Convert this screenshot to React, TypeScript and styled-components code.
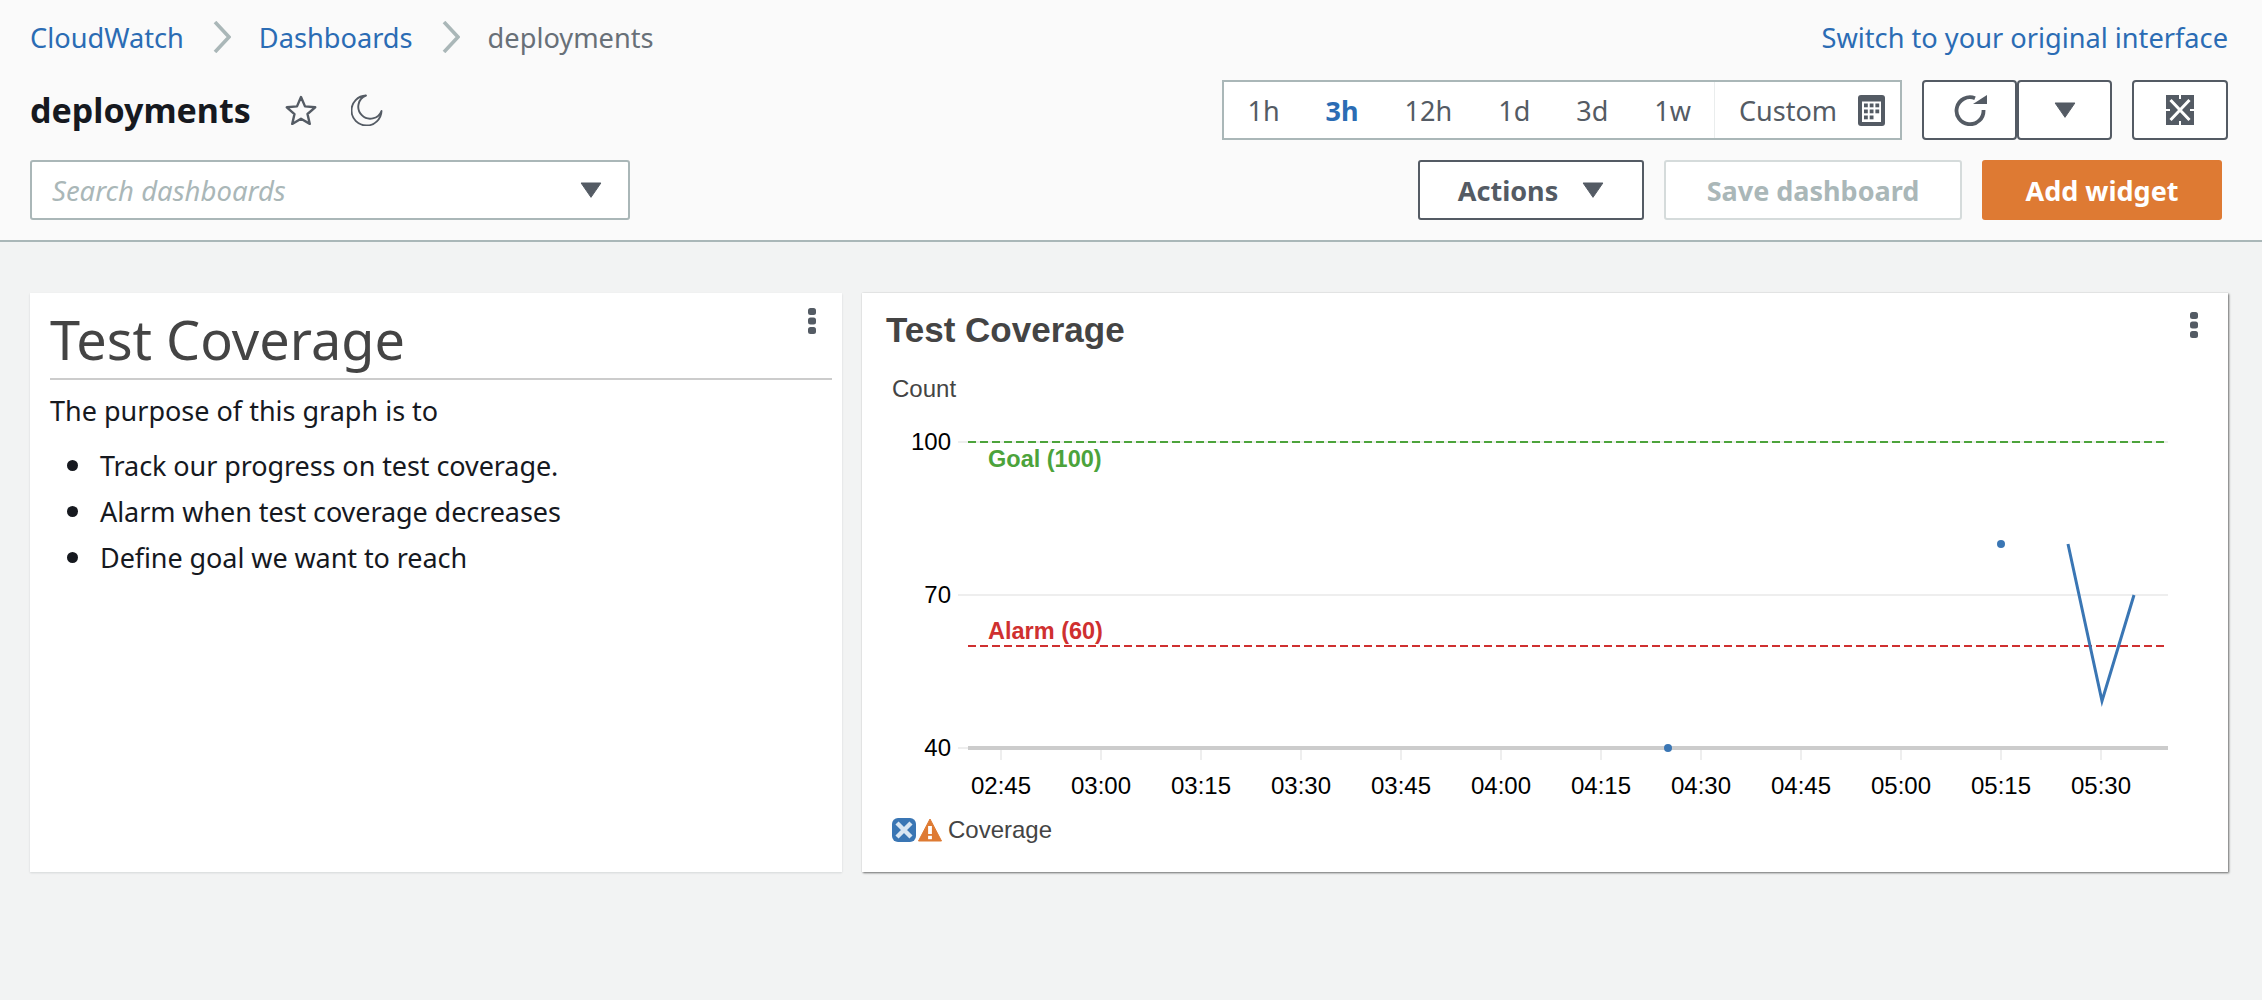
import styled, { createGlobalStyle } from 'styled-components'

const UI_FONT = `"Noto Sans", "Open Sans", sans-serif`
const CHART_FONT = `"Liberation Sans", Arial, sans-serif`

const RANGES = ['1h', '3h', '12h', '1d', '3d', '1w']
const TICKS = ['02:45', '03:00', '03:15', '03:30', '03:45', '04:00', '04:15', '04:30', '04:45', '05:00', '05:15', '05:30']
const GRID_VALUES = [100, 70, 40]

const yFor = (value: number) => 381 - (value - 40) * 5.1
const xFor = (index: number) => 139 + index * 100

const Caret = ({ size = 22 }: { size?: number }) => (
  <svg width={size} height={size * 0.72} viewBox="0 0 22 16" fill="#545b64">
    <path d="M1 1h20L11 15.5z" stroke="#545b64" strokeLinejoin="round" />
  </svg>
)

const Dots = () => (
  <svg width="10" height="26" viewBox="0 0 10 26" fill="#545b64">
    <rect x="1" y="0" width="8" height="7" rx="2.5" />
    <rect x="1" y="9.5" width="8" height="7" rx="2.5" />
    <rect x="1" y="19" width="8" height="7" rx="2.5" />
  </svg>
)

const ChevronIcon = () => (
  <svg width="18" height="32" viewBox="0 0 18 32" fill="none">
    <path d="M2 1l14 15L2 31" stroke="#aab7b8" strokeWidth="3.6" />
  </svg>
)

const StarIcon = () => (
  <svg width="32" height="30" viewBox="0 0 32 30" fill="none">
    <path
      d="M16 2l4 9.4 10.2.9-7.7 6.7 2.3 9.9L16 23.7 7.2 29l2.3-9.9-7.7-6.8L12 11.4z"
      stroke="#545b64"
      strokeWidth="2.4"
      strokeLinejoin="round"
    />
  </svg>
)

const MoonIcon = () => (
  <svg width="32" height="32" viewBox="0 0 32 32" fill="none">
    <path d="M15 1.5A15 15 0 1 0 30.5 17A12 12 0 1 1 15 1.5z" stroke="#545b64" strokeWidth="1.9" strokeLinejoin="round" />
  </svg>
)

const CalendarIcon = () => (
  <svg width="27" height="31" viewBox="0 0 27 31">
    <rect width="27" height="31" rx="3" fill="#545b64" />
    <rect x="4" y="6.5" width="19" height="20.5" fill="#fff" />
    <g fill="#545b64">
      {[0, 1, 2].map((row) =>
        [0, 1, 2].map((col) =>
          row === 2 && col === 2 ? null : (
            <rect key={`${row}-${col}`} x={6 + col * 5.7} y={8.5 + row * 6} width="3.8" height="3.8" />
          ),
        ),
      )}
    </g>
  </svg>
)

const RefreshIcon = () => (
  <svg width="34" height="31" viewBox="0 0 34 31" fill="none">
    <path d="M30.5 15A13.5 13.5 0 1 1 22 3.2" stroke="#545b64" strokeWidth="3.8" />
    <path d="M20 9h14V0z" fill="#545b64" />
  </svg>
)

const FullscreenIcon = () => (
  <svg width="28" height="30" viewBox="0 0 28 30">
    <rect width="28" height="30" fill="#545b64" />
    <path d="M4.5 5l19 20M23.5 5l-19 20" stroke="#fff" strokeWidth="3" fill="none" />
    <path d="M13 0h2v4h-2zM13 26h2v4h-2zM0 14h4v2H0zM24 14h4v2h-4z" fill="#fff" />
    <path d="M9 4h10l-5 6.500zM9 26h10l-5-6.500zM4 10v10l5.500-5zM24 10v10l-5.500-5z" fill="#545b64" />
  </svg>
)

const ErrorBadge = () => (
  <svg width="24" height="24" viewBox="0 0 24 24">
    <rect width="24" height="24" rx="6" fill="#3a76b4" />
    <path d="M5 5l14 14M19 5L5 19" stroke="#d9e6f2" strokeWidth="4.4" />
  </svg>
)

const WarningBadge = () => (
  <svg width="24" height="24" viewBox="0 0 24 24">
    <path d="M12 1L23.500 23H0.500z" fill="#de7a33" stroke="#de7a33" strokeLinejoin="round" />
    <rect x="10.100" y="8" width="3.800" height="8" fill="#fff" />
    <rect x="10.100" y="17.800" width="3.800" height="3.400" fill="#fff" />
  </svg>
)

const CoverageChart = () => (
  <ChartSvg viewBox="0 0 1366 438">
    <AxisTitle x="30" y="30">Count</AxisTitle>

    {GRID_VALUES.map((value) => (
      <g key={value}>
        <line x1="96" x2="1306" y1={yFor(value)} y2={yFor(value)} stroke="#eeeeee" strokeWidth="2" />
        <AxisLabel x="89" y={yFor(value) + 8} textAnchor="end">{value}</AxisLabel>
      </g>
    ))}

    <line x1="106" x2="1303" y1={yFor(100)} y2={yFor(100)} stroke="#4ca33b" strokeWidth="2" strokeDasharray="8 4" />
    <line x1="106" x2="1303" y1={yFor(60)} y2={yFor(60)} stroke="#cf3030" strokeWidth="2" strokeDasharray="8 4" />
    <Annotation x="126" y="100" fill="#4ca33b">Goal (100)</Annotation>
    <Annotation x="126" y="272" fill="#cf3030">Alarm (60)</Annotation>

    {TICKS.map((tick, i) => (
      <g key={tick}>
        <line x1={xFor(i)} x2={xFor(i)} y1="381" y2="393" stroke="#eeeeee" strokeWidth="2" />
        <AxisLabel x={xFor(i)} y="427" textAnchor="middle">{tick}</AxisLabel>
      </g>
    ))}
    <line x1="106" x2="1306" y1="381" y2="381" stroke="#cccccc" strokeWidth="4" />

    <circle cx="1139" cy={yFor(80)} r="4" fill="#3a76b4" />
    <circle cx="806" cy={yFor(40)} r="4" fill="#3a76b4" />
    <polyline points="1206,177 1240,334 1272,228" fill="none" stroke="#3a76b4" strokeWidth="3" />
  </ChartSvg>
)

export default function App() {
  return (
    <>
      <GlobalStyle />
      <Header>
        <TopRow>
          <Breadcrumbs>
            <Crumb>CloudWatch</Crumb>
            <Chevron><ChevronIcon /></Chevron>
            <Crumb>Dashboards</Crumb>
            <Chevron><ChevronIcon /></Chevron>
            <CurrentCrumb>deployments</CurrentCrumb>
          </Breadcrumbs>
          <Crumb>Switch to your original interface</Crumb>
        </TopRow>

        <TitleRow>
          <TitleGroup>
            <PageTitle>deployments</PageTitle>
            <StarIcon />
            <MoonIcon />
          </TitleGroup>
          <Controls>
            <RangePicker>
              {RANGES.map((range) => (
                <RangeItem key={range} $active={range === '3h'}>{range}</RangeItem>
              ))}
              <CustomRange>
                Custom
                <CalendarIcon />
              </CustomRange>
            </RangePicker>
            <IconGroup>
              <IconButton $width={95}><RefreshIcon /></IconButton>
              <IconButton $width={95}><Caret /></IconButton>
            </IconGroup>
            <IconButton $width={96}><FullscreenIcon /></IconButton>
          </Controls>
        </TitleRow>

        <ActionRow>
          <SearchBox>
            <SearchHint>Search dashboards</SearchHint>
            <Caret />
          </SearchBox>
          <Actions>
            <ActionsButton>
              Actions
              <Caret />
            </ActionsButton>
            <SaveButton>Save dashboard</SaveButton>
            <AddButton>Add widget</AddButton>
          </Actions>
        </ActionRow>
      </Header>

      <Board>
        <TextWidget>
          <WidgetMenu $top={15} $right={25}><Dots /></WidgetMenu>
          <TextHeading>Test Coverage</TextHeading>
          <Paragraph>The purpose of this graph is to</Paragraph>
          <BulletList>
            <li>Track our progress on test coverage.</li>
            <li>Alarm when test coverage decreases</li>
            <li>Define goal we want to reach</li>
          </BulletList>
        </TextWidget>

        <ChartWidget>
          <WidgetMenu $top={19} $right={29}><Dots /></WidgetMenu>
          <ChartTitle>Test Coverage</ChartTitle>
          <CoverageChart />
          <Legend>
            <ErrorBadge />
            <WarningBadge />
            <LegendLabel>Coverage</LegendLabel>
          </Legend>
        </ChartWidget>
      </Board>
    </>
  )
}

const GlobalStyle = createGlobalStyle`
  body {
    margin: 0;
    min-height: 1000px;
    background: #f2f3f3;
    font-family: ${UI_FONT};
    color: #16191f;
  }
`

const Header = styled.header`
  display: flex;
  flex-direction: column;
  height: 242px;
  box-sizing: border-box;
  padding: 17px 34px 0 30px;
  background: #fafafa;
  border-bottom: 2px solid #aab7b8;
`

const TopRow = styled.div`
  display: flex;
  justify-content: space-between;
  align-items: center;
  height: 40px;
  margin-bottom: 23px;
`

const Breadcrumbs = styled.nav`
  display: flex;
  align-items: center;
  gap: 28px;
`

const Crumb = styled.a`
  font-size: 27.2px;
  color: #2b6cb4;
`

const CurrentCrumb = styled.span`
  font-size: 27.2px;
  color: #687078;
`

const Chevron = styled.span`
  display: flex;
  margin-left: 1px;
`

const TitleRow = styled.div`
  display: flex;
  justify-content: space-between;
  align-items: center;
  height: 60px;
  margin-bottom: 20px;
`

const TitleGroup = styled.div`
  display: flex;
  align-items: center;
  gap: 34px;
`

const PageTitle = styled.h1`
  margin: 0;
  font-size: 34px;
  font-weight: 700;
`

const Controls = styled.div`
  display: flex;
  gap: 20px;
`

const RangePicker = styled.div`
  display: flex;
  align-items: center;
  height: 60px;
  box-sizing: border-box;
  background: #fff;
  border: 2px solid #aab7b8;
`

const RangeItem = styled.span<{ $active?: boolean }>`
  padding: 0 23px;
  font-size: 27px;
  font-weight: ${(p) => (p.$active ? 700 : 400)};
  color: ${(p) => (p.$active ? '#2b6cb4' : '#545b64')};
`

const CustomRange = styled.span`
  display: flex;
  align-items: center;
  gap: 21px;
  height: 100%;
  padding: 0 15px 0 24px;
  font-size: 27px;
  color: #545b64;
  border-left: 1px solid #eaeded;
`

const IconGroup = styled.div`
  display: flex;
`

const IconButton = styled.button<{ $width: number }>`
  display: flex;
  align-items: center;
  justify-content: center;
  width: ${(p) => p.$width}px;
  height: 60px;
  padding: 0;
  background: #fff;
  border: 2px solid #545b64;
  border-radius: 4px;
`

const ActionRow = styled.div`
  display: flex;
  justify-content: space-between;
  align-items: center;
  height: 60px;
`

const SearchBox = styled.div`
  display: flex;
  justify-content: space-between;
  align-items: center;
  width: 600px;
  height: 60px;
  box-sizing: border-box;
  padding: 0 26px 0 20px;
  background: #fff;
  border: 2px solid #aab7b8;
  border-radius: 3px;
`

const SearchHint = styled.span`
  font-size: 27.5px;
  font-style: italic;
  color: #aab7b8;
`

const Actions = styled.div`
  display: flex;
  gap: 20px;
  margin-right: 6px;
`

const ActionButton = styled.button`
  display: flex;
  align-items: center;
  justify-content: center;
  height: 60px;
  box-sizing: border-box;
  font-family: ${UI_FONT};
  font-size: 27px;
  font-weight: 700;
  border-radius: 3px;
`

const ActionsButton = styled(ActionButton)`
  gap: 24px;
  width: 226px;
  color: #545b64;
  background: #fff;
  border: 2px solid #545b64;
`

const SaveButton = styled(ActionButton)`
  width: 298px;
  color: #aab7b8;
  background: #fff;
  border: 2px solid #d5dbdb;
`

const AddButton = styled(ActionButton)`
  width: 240px;
  color: #fff;
  background: #de7a33;
  border: none;
`

const Board = styled.main`
  display: flex;
  gap: 20px;
  padding: 51px 34px 0 30px;
`

const Widget = styled.section`
  position: relative;
  height: 579px;
  box-sizing: border-box;
  background: #fff;
`

const TextWidget = styled(Widget)`
  width: 812px;
  padding: 13px 10px 0 20px;
  box-shadow: 0 1px 2px rgba(0, 28, 36, 0.12);
`

const ChartWidget = styled(Widget)`
  flex: 1;
  box-shadow: 1px 1px 2px rgba(0, 0, 0, 0.55), 0 0 1px rgba(0, 0, 0, 0.15);
`

const WidgetMenu = styled.span<{ $top: number; $right: number }>`
  position: absolute;
  top: ${(p) => p.$top}px;
  right: ${(p) => p.$right}px;
  display: flex;
`

const TextHeading = styled.h2`
  margin: 0;
  padding-bottom: 6px;
  font-size: 54px;
  font-weight: 400;
  line-height: 66px;
  color: #444;
  border-bottom: 2px solid #ccc;
`

const Paragraph = styled.p`
  margin: 10px 0 0;
  font-size: 27px;
  line-height: 42px;
`

const BulletList = styled.ul`
  margin: 11px 0 0;
  padding-left: 50px;
  font-size: 27px;
  line-height: 46px;
  letter-spacing: -0.08px;
  list-style: none;

  li {
    position: relative;
  }

  li::before {
    content: '';
    position: absolute;
    top: 17px;
    left: -33px;
    width: 11px;
    height: 11px;
    border-radius: 50%;
    background: #16191f;
  }
`

const ChartTitle = styled.h2`
  margin: 0;
  height: 74px;
  padding-left: 24px;
  font-family: ${CHART_FONT};
  font-size: 35px;
  font-weight: 700;
  line-height: 74px;
  color: #444;
`

const ChartSvg = styled.svg`
  display: block;
  width: 1366px;
  height: 438px;
`

const AxisTitle = styled.text`
  font-family: ${CHART_FONT};
  font-size: 24px;
  fill: #444;
`

const AxisLabel = styled.text`
  font-family: ${CHART_FONT};
  font-size: 24px;
  fill: #000;
`

const Annotation = styled.text`
  font-family: ${CHART_FONT};
  font-size: 23.5px;
  font-weight: 700;
`

const Legend = styled.div`
  display: flex;
  align-items: center;
  gap: 2px;
  height: 50px;
  padding-left: 30px;
`

const LegendLabel = styled.span`
  margin-left: 4px;
  font-family: ${CHART_FONT};
  font-size: 24px;
  color: #444;
`
